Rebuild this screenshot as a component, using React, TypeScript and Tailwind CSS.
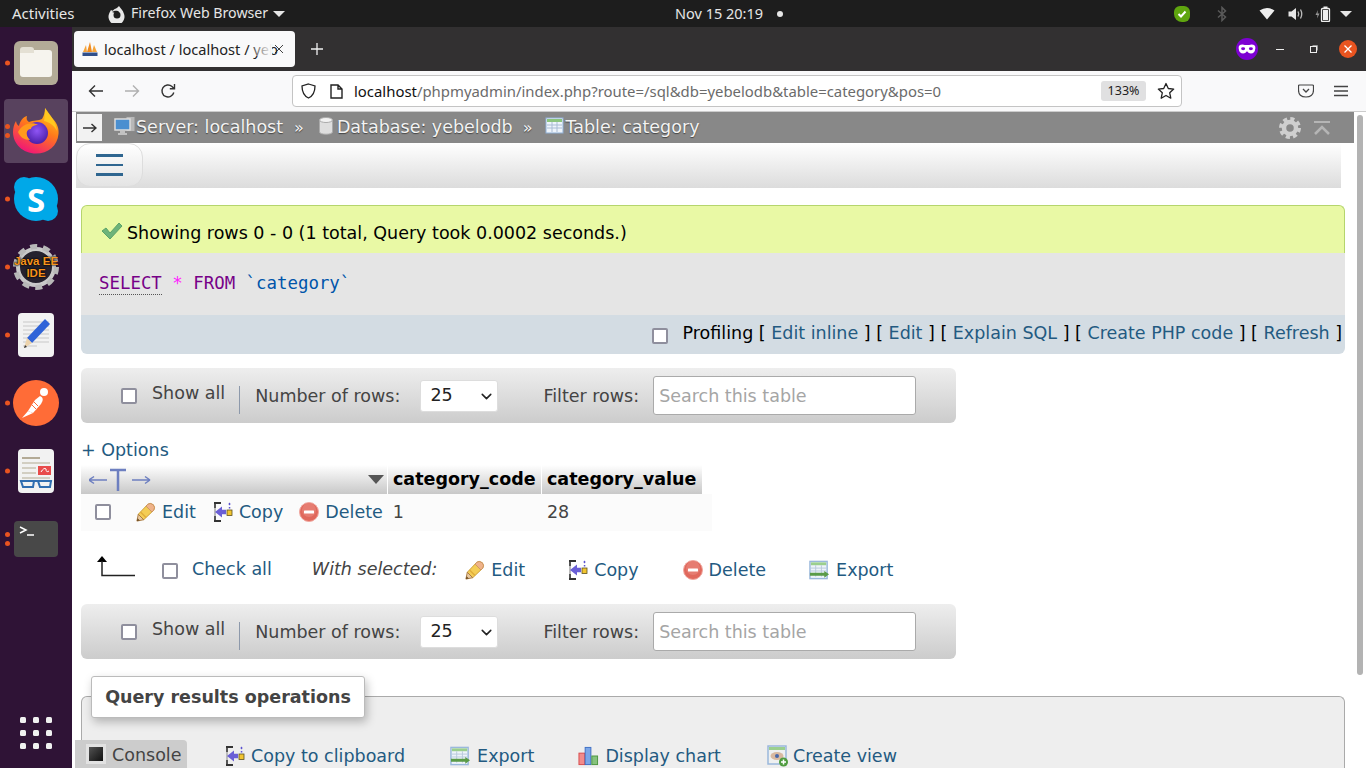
import { useId, type ReactNode } from "react";
import { ChevronDown } from "lucide-react";

const Pencil = () => (
  <svg width="20" height="20" viewBox="0 0 22 22" className="shrink-0">
    <path d="M2.500 13.500 L13 2.500 Q15.500 0.500 19 3 Q21.500 6 19.500 9 L8.500 19.500 Z" fill="#f4cd55" stroke="#c99a35" strokeWidth="1" />
    <path d="M13 2.500 Q15.500 0.500 19 3 Q21.500 6 19.500 9 L17.500 11 L11 4.500 Z" fill="#efb38a" stroke="#c9925f" strokeWidth="1" />
    <path d="M5 11 L11 17" stroke="#e0ac3a" strokeWidth="1.500" />
    <path d="M2.500 13.500 L1 21 L8.500 19.500 Z" fill="#e8c9a0" stroke="#a8763a" strokeWidth="1" />
    <path d="M1 21 L1.700 17.800 L4.200 20.300 Z" fill="#6b4a20" />
  </svg>
);

const CopyIcon = () => (
  <svg width="20" height="22" viewBox="0 0 20 22" className="shrink-0">
    <path d="M1 1h7v2H1zM1 19h7v2H1z" fill="#333" />
    <path d="M1 3h2v4H1zM1 15h2v4H1z" fill="#555" />
    <path d="M1 7h2v8H1z" fill="#bbb" />
    <path d="M2 11 L9 5.500 V8.800 H13 V13.200 H9 V16.500 Z" fill="#6a5fd6" />
    <rect x="14" y="9" width="5" height="5.500" fill="#f2c530" stroke="#5c5020" strokeWidth="0.800" />
    <path d="M16.500 1.500l1.200 1.500-1.200 1.500-1.200-1.500zM15.800 6h1.500v1.500h-1.500z" fill="#5a52d0" />
  </svg>
);

const DeleteIcon = () => (
  <svg width="20" height="20" viewBox="0 0 20 20" className="shrink-0">
    <circle cx="10" cy="10" r="9.500" fill="#e0685c" stroke="#f0a8a0" strokeWidth="1" />
    <circle cx="10" cy="8" r="7" fill="#ea8a7e" opacity="0.6" />
    <rect x="5" y="8.500" width="10" height="3" rx="0.500" fill="#fff" />
  </svg>
);

const ExportIcon = () => (
  <svg width="21" height="20" viewBox="0 0 22 20" className="shrink-0">
    <rect x="1" y="1" width="18" height="18" fill="#eef4fb" stroke="#9ab8dc" strokeWidth="1.500" />
    <rect x="2" y="2" width="16" height="3" fill="#9bcf8e" />
    <path d="M2 8h16M2 11h16M2 14h16M7 5v12M13 5v12" stroke="#b9c9dc" strokeWidth="1" />
    <path d="M1 13h15v-2l5 3.500-5 3.500v-2H1z" fill="#5a9b48" />
  </svg>
);

const ChartIcon = () => (
  <svg width="21" height="20" viewBox="0 0 22 20" className="shrink-0">
    <rect x="1" y="7" width="6" height="12" fill="#f28b8b" stroke="#d84a4a" />
    <rect x="7.500" y="1" width="6" height="18" fill="#7ba6e8" stroke="#3e6fc4" />
    <rect x="14.500" y="10" width="6" height="9" fill="#86c27c" stroke="#4c9540" />
  </svg>
);

const ViewIcon = () => (
  <svg width="22" height="22" viewBox="0 0 22 22" className="shrink-0">
    <rect x="1" y="1" width="18" height="18" fill="#eef0f0" stroke="#9ab8dc" strokeWidth="1.500" />
    <rect x="2" y="2" width="16" height="3" fill="#9bcf8e" />
    <ellipse cx="10" cy="11" rx="6.500" ry="4" fill="#d8b9a0" />
    <circle cx="10" cy="11" r="2" fill="#4868a8" />
    <circle cx="16.500" cy="17" r="4.500" fill="#4f9c3f" />
    <path d="M14 17h5M16.500 14.500v5" stroke="#fff" strokeWidth="1.500" />
  </svg>
);

const Check = ({ className = "" }: { className?: string }) => (
  <span className={`inline-block h-[16px] w-[16px] shrink-0 rounded-[2px] border-2 border-[#8f8f9d] bg-white ${className}`} />
);

const A = ({ children, className = "" }: { children: ReactNode; className?: string }) => (
  <span className={`text-[#235a81] ${className}`}>{children}</span>
);

const Action = ({ icon, label, className = "", gap = "gap-[6px]" }: { icon: ReactNode; label: string; className?: string; gap?: string }) => (
  <span className={`flex items-center ${gap} ${className}`}>
    {icon}
    <A className="pt-[2px]">{label}</A>
  </span>
);

const RowsNav = () => (
  <div className="flex h-[55px] w-[875px] items-center rounded-[6px] bg-gradient-to-b from-[#eeeeee] to-[#cccccc] text-[#444]">
    <Check className="ml-[40px]" />
    <span className="ml-[15px] -translate-y-[2px]">Show all</span>
    <span className="ml-[14px] mt-[8px] h-[28px] w-px bg-[#8d99ab]" />
    <span className="ml-[15px] pt-[3px]">Number of rows:</span>
    <div className="relative ml-[20px] h-[32px] w-[78px]">
      <select className="h-full w-full appearance-none rounded-[3px] border border-[#ddd] bg-white pl-[9px] text-[#222]">
        <option>25</option>
      </select>
      <ChevronDown size={17} strokeWidth={2.200} className="pointer-events-none absolute right-[3px] top-[8px] text-[#222]" />
    </div>
    <span className="ml-[45px] pt-[3px]">Filter rows:</span>
    <input
      placeholder="Search this table"
      className="ml-[14px] h-[39px] w-[263px] rounded-[3px] border border-[#aaa] bg-white px-[5px] placeholder:text-[#a5a5a5]"
    />
  </div>
);

const Dot = () => <span className="h-[5px] w-[5px] rounded-full bg-[#e95420]" />;

const DockItem = ({ children, dots = 1, active = false }: { children: ReactNode; dots?: number; active?: boolean }) => (
  <div className="relative flex h-[68px] w-[72px] items-center justify-center">
    {active && <div className="absolute inset-x-[4px] inset-y-[2px] rounded-[4px] bg-white/20" />}
    <div className="absolute left-[5px] top-1/2 flex -translate-y-1/2 flex-col gap-[4px]">
      {Array.from({ length: dots }).map((_, i) => (
        <Dot key={i} />
      ))}
    </div>
    <div className="relative">{children}</div>
  </div>
);

const FirefoxLogo = ({ size = 48 }: { size?: number }) => {
  const id = useId();
  return (
    <svg width={size} height={size} viewBox="0 0 48 48">
      <defs>
        <linearGradient id={`${id}a`} x1="0.800" y1="0" x2="0.300" y2="1">
          <stop offset="0" stopColor="#ffd21f" />
          <stop offset="0.45" stopColor="#ff7a1a" />
          <stop offset="1" stopColor="#f0127a" />
        </linearGradient>
        <radialGradient id={`${id}b`} cx="0.5" cy="0.4" r="0.6">
          <stop offset="0" stopColor="#8f55f5" />
          <stop offset="1" stopColor="#4a1fa8" />
        </radialGradient>
      </defs>
      <path d="M33 1 C34 6 37 8 41 12 C46 17 47 23 46.500 27 C45.500 39 36 46.500 24 46.500 C11 46.500 1 37 1 25 C1 21 2 17 4 14 C4.500 17 5.500 18 7 19 C8 14 11 10 15 9 C14 12 15 14 17 15 C21 13 27 14 30 12 C32 9 33 5 33 1 Z" fill={`url(#${id}a)`} />
      <circle cx="25" cy="26" r="11" fill={`url(#${id}b)`} />
      <path d="M6 25 C10 17 20 14 26 18 C22 18 19 20 19 22 C14 22 13 28 18 33 C12 33 8 30 6 25 Z" fill="#ff9a1c" />
      <path d="M33 1 C38 8 44 14 45 24 C42 18 37 15 32 14 C33 9 33 5 33 1 Z" fill="#ffc81f" />
    </svg>
  );
};

const PmaIcon = () => (
  <svg width="16" height="16" viewBox="0 0 16 16">
    <path d="M1 11 L4 4 L5 11 Z" fill="#f5a43a" />
    <path d="M5 11 L8 1 L10 11 Z" fill="#ef8a1e" />
    <path d="M10 11 L12 4 L15 11 Z" fill="#f5a43a" />
    <rect x="0.500" y="11.500" width="15" height="3.500" fill="#2f4e8a" />
  </svg>
);

const App = () => {
  return (
    <div className="flex h-[768px] w-[1366px] flex-col overflow-hidden bg-white font-['DejaVu_Sans',sans-serif] text-[17.500px] leading-none">
      {/* gnome top bar */}
      <div className="flex h-[27px] shrink-0 items-center bg-[#1d1d1d] font-['Noto_Sans',sans-serif] text-[14.500px] text-[#e6e6e6]">
        <span className="ml-[12px] w-[63px] whitespace-nowrap text-[15px]">Activities</span>
        <svg width="18" height="18" viewBox="0 0 18 18" className="ml-[33px]">
          <path d="M11 1 C12 3 15 5 16 9 A8 8 0 1 1 1 9 C1.500 7 2.500 6 3 5 C4 6 5 6 5.500 5 C7 3.500 9 3.500 11 1Z" fill="#e8e8e8" />
          <circle cx="9" cy="10" r="3.500" fill="#1d1d1d" />
          <path d="M4 7 C7 5 10 5.500 11 7 L7 8 Z" fill="#1d1d1d" />
        </svg>
        <span className="ml-[5px] w-[138px] whitespace-nowrap text-[14.200px]">Firefox Web Browser</span>
        <span className="ml-[4px] h-0 w-0 border-x-[6px] border-t-[6px] border-x-transparent border-t-[#e6e6e6]" />
        <span className="ml-[390px] w-[88px] whitespace-nowrap">Nov 15 20:19</span>
        <span className="ml-[14px] h-[6px] w-[6px] rounded-full bg-[#e6e6e6]" />
        <div className="ml-[391px] flex h-[16px] w-[16px] items-center justify-center rounded-[6px] rounded-bl-[8px] bg-[#5fa50f]">
          <svg width="10" height="8" viewBox="0 0 10 8"><path d="M1.500 4 L4 6.500 L8.500 1.500" fill="none" stroke="#fff" strokeWidth="2" /></svg>
        </div>
        <svg width="10" height="16" viewBox="0 0 10 16" className="ml-[27px]">
          <path d="M1 4.500 L8.500 11 L5 14.500 V1.500 L8.500 5 L1 11.500" fill="none" stroke="#5a5a5a" strokeWidth="1.500" />
        </svg>
        <svg width="16" height="13" viewBox="0 0 16 13" className="ml-[32px]">
          <path d="M8 12.500 L0.500 3.500 Q8 -1.500 15.500 3.500 Z" fill="#eee" />
        </svg>
        <svg width="16" height="14" viewBox="0 0 16 14" className="ml-[13px]">
          <path d="M0.500 4.500h3L8 1v12L3.500 9.500h-3z" fill="#e6e6e6" />
          <path d="M10 4.500 Q11.500 7 10 9.500M12.500 2.500 Q15 7 12.500 11.500" fill="none" stroke="#bbb" strokeWidth="1.300" />
        </svg>
        <svg width="16" height="16" viewBox="0 0 16 16" className="ml-[11px]">
          <path d="M3 4 L0.500 9h2L2 12.500 L4.500 7.500h-2z" fill="#999" />
          <rect x="6.500" y="2.500" width="8" height="13" rx="1" fill="none" stroke="#eee" strokeWidth="1.300" />
          <rect x="8.500" y="0.500" width="4" height="2" fill="#eee" />
          <rect x="8" y="4" width="5" height="10" fill="#eee" />
        </svg>
        <span className="ml-[9px] h-0 w-0 border-x-[6px] border-t-[6px] border-x-transparent border-t-[#e6e6e6]" />
      </div>

      <div className="flex min-h-0 flex-1">
        {/* dock */}
        <div className="flex w-[72px] shrink-0 flex-col items-center bg-[#2f1336]">
          <div className="flex flex-col pt-[2px]">
            <DockItem>
              <div className="flex h-[44px] w-[44px] items-center justify-center rounded-[6px] bg-[#b3ab97]">
                <div className="relative h-[27px] w-[32px] rounded-[3px] bg-[#f6f4ee]">
                  <div className="absolute -top-[3px] left-0 h-[6px] w-[14px] rounded-t-[3px] bg-[#e4e0d4]" />
                </div>
              </div>
            </DockItem>
            <DockItem dots={2} active>
              <FirefoxLogo />
            </DockItem>
            <DockItem>
              <div className="relative flex h-[44px] w-[44px] items-center justify-center rounded-full bg-[#00a8e8] font-['Open_Sans',sans-serif] text-[33px] font-bold text-white">
                <div className="absolute left-0 top-0 h-[20px] w-[20px] rounded-full bg-[#00a8e8]" />
                <div className="absolute bottom-0 right-0 h-[20px] w-[20px] rounded-full bg-[#00a8e8]" />
                <span className="relative">S</span>
              </div>
            </DockItem>
            <DockItem>
              <div className="relative flex h-[46px] w-[46px] items-center justify-center">
                <svg width="46" height="46" viewBox="0 0 46 46" className="absolute inset-0">
                  <circle cx="23" cy="23" r="18" fill="#26222e" stroke="#c9c9c9" strokeWidth="4" />
                  <circle cx="23" cy="23" r="20.500" fill="none" stroke="#b8b8b8" strokeWidth="5" strokeDasharray="7 5.880" />
                </svg>
                <span className="relative text-center font-['Liberation_Sans',sans-serif] text-[11.500px] font-bold leading-[12px] text-[#f7941d] [text-shadow:0_0_2px_#000,0_0_2px_#000]">
                  Java EE
                  <br />
                  IDE
                </span>
              </div>
            </DockItem>
            <DockItem>
              <div className="relative h-[44px] w-[36px] overflow-hidden rounded-[4px] bg-[#f2f2f2]">
                <svg width="36" height="44" viewBox="0 0 36 44">
                  <path d="M5 9h26M5 13h26M5 17h26M5 21h26M5 25h26M5 29h26M5 33h14" stroke="#c8c8c8" strokeWidth="1" />
                  <path d="M27 6 L32 11 L14 30 L9 25 Z" fill="#2f63d8" />
                  <path d="M9 25 L14 30 L6 35 Z" fill="#ecd3ac" />
                  <path d="M6 35 L7 32 L9 34 Z" fill="#333" />
                </svg>
              </div>
            </DockItem>
            <DockItem>
              <div className="flex h-[46px] w-[46px] items-center justify-center rounded-full bg-[#ff6c37]">
                <svg width="34" height="34" viewBox="0 0 34 34">
                  <circle cx="25" cy="6" r="4" fill="#fff" />
                  <path d="M21 10 Q26 12 22 18 L14 27 L9 25 L16 14 Z" fill="#fff" />
                  <path d="M14 27 L3 32 L9 25 Z" fill="#fff" />
                  <path d="M15 16 L19 20M13 19 L17 23" stroke="#ff6c37" strokeWidth="1" />
                </svg>
              </div>
            </DockItem>
            <DockItem>
              <div className="relative h-[44px] w-[36px] overflow-hidden rounded-[4px] bg-[#f2f2f2]">
                <svg width="36" height="44" viewBox="0 0 36 44">
                  <path d="M4 9h18" stroke="#b3aa96" strokeWidth="2" />
                  <path d="M4 14h28M4 19h14M4 24h14M4 29h28" stroke="#c8c2b2" strokeWidth="1.500" />
                  <rect x="20" y="17" width="13" height="9" fill="#e84b4b" />
                  <path d="M23 23 Q26 18 28 20 Q28 24 31 22" fill="none" stroke="#fff" strokeWidth="1" />
                  <path d="M2 32h32" stroke="#2f6db0" strokeWidth="2" />
                  <path d="M3 32h13l-1 6h-10zM20 32h13l-1 6h-10z" fill="none" stroke="#2f6db0" strokeWidth="2" />
                </svg>
              </div>
            </DockItem>
            <DockItem dots={2}>
              <div className="h-[36px] w-[44px] rounded-[4px] bg-[#484848]">
                <svg width="44" height="36" viewBox="0 0 44 36">
                  <path d="M6 6 L12 9 L6 12" fill="none" stroke="#fff" strokeWidth="1.500" />
                  <path d="M13 14h7" stroke="#fff" strokeWidth="1.500" />
                </svg>
              </div>
            </DockItem>
          </div>
          <div className="mt-[144px] grid grid-cols-3 gap-[7px]">
            {Array.from({ length: 9 }).map((_, i) => (
              <span key={i} className="h-[6px] w-[6px] rounded-[1.500px] bg-[#f0f0f0]" />
            ))}
          </div>
        </div>

        {/* browser */}
        <div className="flex min-w-0 flex-1 flex-col">
          <div className="flex h-[44px] shrink-0 items-center bg-[#323031] font-['Noto_Sans',sans-serif]">
            <div className="ml-[2px] flex h-[36px] w-[221px] items-center rounded-[4px] bg-[#f9f9fa] pl-[8px] text-[14.600px] text-[#222]">
              <PmaIcon />
              <span className="relative ml-[6px] w-[168px] whitespace-nowrap">
                localhost / localhost / yeb
                <span className="absolute inset-y-0 right-0 w-[24px] bg-gradient-to-r from-transparent to-[#f9f9fa]" />
              </span>
              <svg width="10" height="10" viewBox="0 0 10 10" className="ml-[2px]">
                <path d="M1 1 L9 9M9 1 L1 9" stroke="#444" strokeWidth="1" />
              </svg>
            </div>
            <svg width="12" height="12" viewBox="0 0 12 12" className="ml-[16px]">
              <path d="M6 0v12M0 6h12" stroke="#f0f0f0" strokeWidth="1.300" />
            </svg>
            <div className="ml-auto flex h-[22px] w-[22px] items-center justify-center rounded-full bg-[#7d00d2]">
              <svg width="18" height="10" viewBox="0 0 16 9">
                <path d="M4 0.500 Q8 1.500 12 0.500 Q16 0.500 15.500 4 Q15 8.500 11.500 8.500 Q9.500 8.500 8 6.500 Q6.500 8.500 4.500 8.500 Q1 8.500 0.500 4 Q0 0.500 4 0.500Z" fill="#fff" />
                <ellipse cx="4.500" cy="4.300" rx="1.800" ry="1.300" fill="#7d00d2" />
                <ellipse cx="11.500" cy="4.300" rx="1.800" ry="1.300" fill="#7d00d2" />
              </svg>
            </div>
            <span className="ml-[18px] h-px w-[8px] bg-[#eee]" />
            <svg width="8" height="8" viewBox="0 0 8 8" className="ml-[26px]">
              <rect x="0.500" y="1.500" width="6" height="6" fill="none" stroke="#eee" />
              <path d="M2.500 0.500h5v5" fill="none" stroke="#999" />
            </svg>
            <div className="ml-[21px] mr-[9px] flex h-[18px] w-[18px] items-center justify-center rounded-full bg-[#e95420]">
              <svg width="8" height="8" viewBox="0 0 8 8">
                <path d="M0.500 0.500 L7.500 7.500M7.500 0.500 L0.500 7.500" stroke="#fff" strokeWidth="1.300" />
              </svg>
            </div>
          </div>

          <div className="flex h-[41px] shrink-0 items-center border-b border-[#ccc] bg-[#f9f9fa] font-['Noto_Sans',sans-serif]">
            <svg width="16" height="14" viewBox="0 0 16 14" className="ml-[16px]">
              <path d="M15 7H1.500M7 1.500 L1.500 7 L7 12.500" fill="none" stroke="#333" strokeWidth="1.400" />
            </svg>
            <svg width="16" height="14" viewBox="0 0 16 14" className="ml-[20px]">
              <path d="M1 7h13.500M9 1.500 L14.500 7 L9 12.500" fill="none" stroke="#b0b0b0" strokeWidth="1.400" />
            </svg>
            <svg width="16" height="16" viewBox="0 0 16 16" className="ml-[20px]">
              <path d="M13.800 9.500 A6 6 0 1 1 12 3.500 L14 5.500 M14.500 1 V5.800 H9.800" fill="none" stroke="#333" strokeWidth="1.400" />
            </svg>
            <div className="ml-[116px] flex h-[32px] w-[890px] items-center rounded-[4px] border border-[#c4c4c4] bg-white">
              <svg width="15" height="16" viewBox="0 0 15 16" className="ml-[8px]">
                <path d="M7.500 1 L14 3 Q14 12 7.500 15 Q1 12 1 3 Z" fill="none" stroke="#222" strokeWidth="1.300" />
              </svg>
              <svg width="13" height="15" viewBox="0 0 13 15" className="ml-[14px]">
                <path d="M1 1h7l4 4v9H1z M8 1v4h4" fill="none" stroke="#222" strokeWidth="1.400" />
              </svg>
              <span className="ml-[11px] w-[587px] whitespace-nowrap text-[14.900px] text-[#111]">
                localhost<span className="text-[#6b6b6b]">/phpmyadmin/index.php?route=/sql&amp;db=yebelodb&amp;table=category&amp;pos=0</span>
              </span>
              <span className="ml-auto flex h-[20px] w-[45px] items-center justify-center rounded-[3px] bg-[#e0e0e1] text-[12.500px] text-[#222]">133%</span>
              <svg width="18" height="18" viewBox="0 0 18 18" className="ml-[11px] mr-[6px]">
                <path d="M9 1.500 L11.300 6.500 L16.700 7.100 L12.700 10.800 L13.800 16.200 L9 13.500 L4.200 16.200 L5.300 10.800 L1.300 7.100 L6.700 6.500 Z" fill="none" stroke="#222" strokeWidth="1.300" strokeLinejoin="round" />
              </svg>
            </div>
            <svg width="16" height="14" viewBox="0 0 16 14" className="ml-[116px]">
              <path d="M1.500 1h13q1 0 1 1v4q0 7-7.500 7T.500 6V2q0-1 1-1z" fill="none" stroke="#444" strokeWidth="1.200" />
              <path d="M5 5 L8 8 L11 5" fill="none" stroke="#444" strokeWidth="1.300" />
            </svg>
            <svg width="14" height="12" viewBox="0 0 14 12" className="ml-[20px]">
              <path d="M0 1.500h14M0 6h14M0 10.500h14" stroke="#444" strokeWidth="1.300" />
            </svg>
          </div>

          {/* page */}
          <div className="relative min-h-0 flex-1 overflow-hidden bg-white pl-[4px]">
            <div className="absolute right-[3px] top-[3px] h-[560px] w-[6px] rounded-full bg-[#b3b3b3]" />

            <div className="flex h-[31px] w-[1278px] items-center bg-[#888888] text-[#f3f3f3] [text-shadow:0_1px_1px_#444]">
              <div className="ml-px flex h-[27px] w-[25px] items-center justify-center bg-[#f2f2f2] text-[#333]">
                <svg width="14" height="10" viewBox="0 0 14 10">
                  <path d="M0 5h12.500M8.500 1 L13 5 L8.500 9" fill="none" stroke="#333" strokeWidth="1.500" />
                </svg>
              </div>
              <svg width="22" height="20" viewBox="0 0 22 20" className="ml-[12px] -mt-[4px]">
                <rect x="12" y="0.500" width="9" height="15" fill="#b8b8b8" stroke="#8a8a8a" />
                <rect x="1" y="3" width="15" height="11" fill="#4a8fd0" stroke="#dcdcdc" strokeWidth="1.500" />
                <path d="M6 16h5M4 18h9" stroke="#d5d5d5" strokeWidth="1.500" />
              </svg>
              <span className="whitespace-nowrap pt-[1px]">Server: localhost</span>
              <span className="ml-[11px] pt-[1px] text-[16px]">»</span>
              <svg width="16" height="18" viewBox="0 0 16 18" className="ml-[14px] -mt-[4px]">
                <path d="M1.500 3v12c0 3 13 3 13 0V3z" fill="#dedede" stroke="#aaa" />
                <ellipse cx="8" cy="3" rx="6.500" ry="2.500" fill="#f2f2f2" stroke="#aaa" />
              </svg>
              <span className="ml-[3px] whitespace-nowrap pt-[1px]">Database: yebelodb</span>
              <span className="ml-[10px] pt-[1px] text-[16px]">»</span>
              <svg width="20" height="18" viewBox="0 0 20 18" className="ml-[13px] -mt-[4px]">
                <rect x="1" y="1" width="17" height="15" fill="#eef4fb" stroke="#8fb0d6" />
                <rect x="2" y="2" width="15" height="3" fill="#8cc47e" />
                <path d="M2 8h15M2 11h15M7 5v10M12 5v10" stroke="#a9bcd4" />
              </svg>
              <span className="whitespace-nowrap pt-[1px]">Table: category</span>
              <svg width="22" height="22" viewBox="0 0 22 22" className="ml-auto">
                <circle cx="11" cy="11" r="6" fill="none" stroke="#cfcfcf" strokeWidth="4.500" />
                <circle cx="11" cy="11" r="9" fill="none" stroke="#cfcfcf" strokeWidth="4" strokeDasharray="4 3.070" />
              </svg>
              <svg width="16" height="14" viewBox="0 0 16 14" className="ml-[13px] mr-[24px]">
                <path d="M0 1h16" stroke="#b5b5b5" strokeWidth="2" />
                <path d="M1 13 L8 6 L15 13" fill="none" stroke="#b5b5b5" strokeWidth="2.500" />
              </svg>
            </div>

            <div className="h-[45px] w-[1265px] bg-gradient-to-b from-white to-[#dcdcdc]">
              <div className="flex h-[44px] w-[67px] flex-col items-center justify-center gap-[7px] rounded-[14px] border border-[#ddd] bg-gradient-to-b from-white to-[#e4e4e4]">
                <span className="h-[2.500px] w-[27px] bg-[#2f6690]" />
                <span className="h-[2.500px] w-[27px] bg-[#2f6690]" />
                <span className="h-[2.500px] w-[27px] bg-[#2f6690]" />
              </div>
            </div>

            <div className="ml-[5px] mt-[17px] w-[1264px]">
              <div className="flex h-[48px] items-center rounded-t-[6px] border border-b-0 border-[#b5d56d] bg-[#e9f9a5] pl-[19px] text-black">
                <svg width="22" height="20" viewBox="0 0 22 20" className="mt-[2px]">
                  <path d="M1 10 L5 7 L9 12 L18 2 L21 5 L9 18 Z" fill="#6db37a" stroke="#5aa368" strokeWidth="1" />
                </svg>
                <span className="ml-[4px] whitespace-nowrap pt-[8px]">Showing rows 0 - 0 (1 total, Query took 0.0002 seconds.)</span>
              </div>
              <div className="flex h-[62px] items-center whitespace-pre bg-[#e5e5e5] pl-[18px] pt-[2px] font-['DejaVu_Sans_Mono',monospace] text-[17.400px]">
                <span className="border-b border-dotted border-[#555] pb-[1px] text-[#770088]">SELECT</span>
                <span className="pb-[2px] text-[#ff22ff]"> * </span>
                <span className="pb-[2px] text-[#770088]">FROM</span>
                <span className="pb-[2px] text-[#0055aa]"> `category`</span>
              </div>
              <div className="flex h-[39px] items-center justify-end rounded-b-[6px] bg-[#d3dce3] pr-[3px] text-black">
                <Check className="mt-[3px]" />
                <span className="ml-[15px] whitespace-nowrap pb-[2px]">
                  Profiling [ <A>Edit inline</A> ] [ <A>Edit</A> ] [ <A>Explain SQL</A> ] [ <A>Create PHP code</A> ] [ <A>Refresh</A> ]
                </span>
              </div>
            </div>

            <div className="ml-[5px] mt-[14px]">
              <RowsNav />
            </div>

            <div className="ml-[5px] mt-[17px] h-[20px] pt-[2px]">
              <A>+ Options</A>
            </div>

            {/* results table */}
            <div className="ml-[5px] mt-[5px] flex h-[29px] w-[621px] bg-gradient-to-b from-white to-[#c8c8c8] font-bold text-black">
              <div className="flex w-[307px] items-center border-r border-white pl-[8px]">
                <svg width="62" height="26" viewBox="0 0 62 26">
                  <path d="M0 13h18M0 13l5-3.500M0 13l5 3.500" fill="none" stroke="#6d7fc0" strokeWidth="1.500" />
                  <path d="M21 3h16M29 3v21" stroke="#6d7fc0" strokeWidth="2.500" />
                  <path d="M43 13h18M61 13l-5-3.500M61 13l-5 3.500" fill="none" stroke="#6d7fc0" strokeWidth="1.500" />
                </svg>
                <span className="ml-auto mr-[3px] h-0 w-0 border-x-[8px] border-t-[9px] border-x-transparent border-t-[#555]" />
              </div>
              <div className="flex w-[154px] items-center border-r border-white pl-[5px] pt-[1px]">category_code</div>
              <div className="flex flex-1 items-center pl-[5px] pt-[1px]">category_value</div>
            </div>
            <div className="ml-[5px] flex h-[37px] w-[631px] items-center bg-[#fbfbfb] pb-[2px] text-[#444]">
              <Check className="ml-[14px]" />
              <Action icon={<Pencil />} label="Edit" className="ml-[25px]" />
              <Action icon={<CopyIcon />} label="Copy" className="ml-[17px]" />
              <Action icon={<DeleteIcon />} label="Delete" className="ml-[16px]" />
              <span className="ml-[10px] pt-[2px]">1</span>
              <span className="ml-[143px] pt-[2px]">28</span>
            </div>

            <div className="ml-[5px] mt-[19px] flex h-[40px] w-[875px] items-center">
              <svg width="40" height="24" viewBox="0 0 40 24" className="ml-[15px] -mt-[6px]">
                <path d="M1 7 L6 1 L11 7 Z" fill="#000" />
                <path d="M6 6v14.500h33" fill="none" stroke="#222" strokeWidth="1.500" />
              </svg>
              <Check className="ml-[26px] mt-[2px]" />
              <A className="ml-[14px]">Check all</A>
              <span className="ml-[40px] italic text-[#444]">With selected:</span>
              <Action icon={<Pencil />} label="Edit" className="ml-[28px]" />
              <Action icon={<CopyIcon />} label="Copy" className="ml-[43px]" />
              <Action icon={<DeleteIcon />} label="Delete" className="ml-[44px]" />
              <Action icon={<ExportIcon />} label="Export" className="ml-[43px]" />
            </div>

            <div className="ml-[5px] mt-[14px]">
              <RowsNav />
            </div>

            <div className="relative ml-[5px] mt-[37px] h-[100px] w-[1264px] rounded-t-[6px] border border-b-0 border-[#aaa] bg-[#eeeeee]">
              <div className="absolute -top-[21px] left-[9px] flex h-[42px] w-[274px] items-center justify-center rounded-[3px] border border-[#bbb] bg-white pt-[2px] font-bold text-[#444] shadow-[2px_4px_10px_rgba(0,0,0,0.25)]">
                Query results operations
              </div>
              <div className="flex pt-[48px] pl-[143px]">
                <Action icon={<CopyIcon />} label="Copy to clipboard" />
                <Action icon={<ExportIcon />} label="Export" className="ml-[45px]" />
                <Action icon={<ChartIcon />} label="Display chart" className="ml-[44px]" />
                <Action icon={<ViewIcon />} label="Create view" className="ml-[46px]" gap="gap-[4px]" />
              </div>
            </div>

            {/* console tab sits on top of the page */}
            <div className="absolute bottom-0 left-[3px] flex h-[28px] w-[112px] items-center rounded-tr-[4px] bg-[#cccccc] pl-[11px] text-[#444]">
              <span className="h-[20px] w-[20px] border-[3px] border-[#e2e2e2] bg-gradient-to-br from-[#555] to-[#111]" />
              <span className="ml-[6px] pt-[3px]">Console</span>
            </div>
          </div>
        </div>
      </div>
    </div>
  );
};

export default App;
